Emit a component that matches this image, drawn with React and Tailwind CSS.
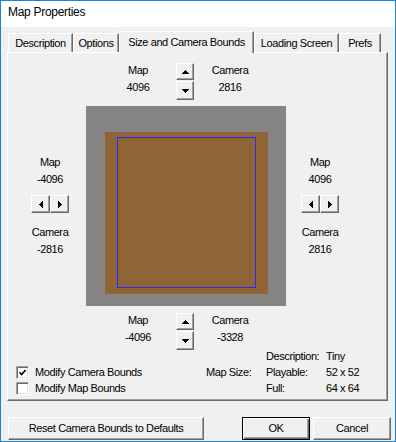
import React from "react";

const btn3d =
  "bg-[#f0f0f0] border border-t-white border-l-white border-r-[#696969] border-b-[#696969] shadow-[inset_-1px_-1px_0_#a0a0a0] flex items-center justify-center";

function Up() {
  return (
    <svg width="7" height="4" shapeRendering="crispEdges">
      <polygon points="0,4 7,4 3.5,0" fill="black" />
    </svg>
  );
}
function Down() {
  return (
    <svg width="7" height="4" shapeRendering="crispEdges">
      <polygon points="0,0 7,0 3.5,4" fill="black" />
    </svg>
  );
}
function Left() {
  return (
    <svg width="4" height="7" shapeRendering="crispEdges">
      <polygon points="4,0 4,7 0,3.5" fill="black" />
    </svg>
  );
}
function Right() {
  return (
    <svg width="4" height="7" shapeRendering="crispEdges">
      <polygon points="0,0 0,7 4,3.5" fill="black" />
    </svg>
  );
}

function VSpin() {
  return (
    <div className="mt-[1px] flex w-[18px] flex-col gap-[1px]">
      <div className={`${btn3d} h-[17px]`}>
        <Up />
      </div>
      <div className={`${btn3d} h-[19px]`}>
        <Down />
      </div>
    </div>
  );
}

function HSpin() {
  return (
    <div className="flex justify-center">
      <div className={`${btn3d} h-[18px] w-[19px]`}>
        <Left />
      </div>
      <div className={`${btn3d} h-[18px] w-[19px]`}>
        <Right />
      </div>
    </div>
  );
}

function Pair({ a, b }) {
  return (
    <div className="flex flex-col text-center leading-[17px]">
      <div>{a}</div>
      <div>{b}</div>
    </div>
  );
}

function TopRow({ map, cam }) {
  return (
    <div className="ml-[105px] flex">
      <div className="w-[50px]">
        <Pair a="Map" b={map} />
      </div>
      <div className="ml-[13px]">
        <VSpin />
      </div>
      <div className="ml-[11px] w-[50px]">
        <Pair a="Camera" b={cam} />
      </div>
    </div>
  );
}

function SideCol({ map, cam, className }) {
  return (
    <div className={`flex flex-col pt-[48px] ${className}`}>
      <Pair a="Map" b={map} />
      <div className="mt-[7px]">
        <HSpin />
      </div>
      <div className="mt-[11px]">
        <Pair a="Camera" b={cam} />
      </div>
    </div>
  );
}

function Tab({ w, children, selected }) {
  if (selected) {
    return (
      <div
        className={`relative z-10 mb-[-1px] flex h-[22px] items-center justify-center border-l border-t border-r border-l-white border-t-white border-r-[#696969] bg-[#f0f0f0] pb-[1px] shadow-[inset_-1px_0_0_#a0a0a0] ${w}`}
      >
        {children}
      </div>
    );
  }
  return (
    <div
      className={`flex h-[19px] items-center justify-center border-l border-t border-r border-l-white border-t-white border-r-[#696969] bg-[#f0f0f0] pt-[1px] shadow-[inset_-1px_0_0_#a0a0a0] ${w}`}
    >
      {children}
    </div>
  );
}

function Check({ checked }) {
  return (
    <div className="flex h-[13px] w-[13px] items-center justify-center border border-t-[#a0a0a0] border-l-[#a0a0a0] border-r-white border-b-white bg-white shadow-[inset_1px_1px_0_#696969,inset_-1px_-1px_0_#e3e3e3]">
      {checked && (
        <svg width="9" height="9">
          <polyline
            points="1.5,4.2 3.6,6.5 7.6,2"
            fill="none"
            stroke="black"
            strokeWidth="1.7"
          />
        </svg>
      )}
    </div>
  );
}

export default function App() {
  return (
    <div className="flex h-[442px] w-[396px] flex-col border border-[#1883d7] bg-[#f0f0f0] font-['Liberation_Sans',Arial,sans-serif] text-[11px] tracking-[-0.4px] text-black">
      <div className="h-[26px] bg-white pl-[7px] text-[12px] leading-[22px] tracking-[-0.3px]">
        Map Properties
      </div>

      <div className="ml-[7px] mt-[4px] flex h-[21px] items-end">
        <Tab w="w-[65px]">Description</Tab>
        <Tab w="w-[46px]">Options</Tab>
        <Tab w="w-[135px]" selected>
          Size and Camera Bounds
        </Tab>
        <Tab w="w-[85px]">Loading Screen</Tab>
        <Tab w="w-[42px]">Prefs</Tab>
      </div>

      <div className="ml-[6px] flex h-[349px] w-[381px] flex-col border border-t-white border-l-white border-r-[#696969] border-b-[#696969] pt-[9px] shadow-[inset_-1px_-1px_0_#a0a0a0]">
        <TopRow map="4096" cam="2816" />

        <div className="mt-[6px] flex">
          <SideCol map="-4096" cam="-2816" className="ml-[6px] w-[72px]" />
          <div className="h-[200px] w-[200px] bg-[#878583] pl-[19px] pt-[26px]">
            <div className="h-[162px] w-[163px] bg-[#8f6538] pl-[12px] pt-[5px]">
              <div className="h-[151px] w-[139px] bg-[#2a2aff] p-[1px]">
                <div className="h-full w-full bg-[#8f6538]" />
              </div>
            </div>
          </div>
          <SideCol map="4096" cam="2816" className="w-[68px]" />
        </div>

        <div className="mt-[6px]">
          <TopRow map="-4096" cam="-3328" />
        </div>

        <div className="mt-[-2px] flex leading-[16px]">
          <div className="ml-[8px] flex w-[190px] flex-col pt-[16px]">
            <div className="flex h-[16px] items-center">
              <Check checked />
              <span className="ml-[6px]">Modify Camera Bounds</span>
            </div>
            <div className="flex h-[16px] items-center">
              <Check />
              <span className="ml-[6px]">Modify Map Bounds</span>
            </div>
          </div>
          <div className="w-[60px] pt-[16px]">Map Size:</div>
          <div className="flex w-[60px] flex-col">
            <div>Description:</div>
            <div>Playable:</div>
            <div>Full:</div>
          </div>
          <div className="flex flex-col">
            <div>Tiny</div>
            <div>52 x 52</div>
            <div>64 x 64</div>
          </div>
        </div>
      </div>

      <div className="ml-[7px] mt-[16px] flex h-[23px]">
        <div className={`${btn3d} w-[196px]`}>Reset Camera Bounds to Defaults</div>
        <div className="ml-[38px] flex w-[68px] items-center justify-center border border-black bg-[#f0f0f0] shadow-[inset_1px_1px_0_#fff,inset_-1px_-1px_0_#696969,inset_-2px_-2px_0_#a0a0a0]">
          OK
        </div>
        <div className={`${btn3d} ml-[3px] w-[78px]`}>Cancel</div>
      </div>
    </div>
  );
}
